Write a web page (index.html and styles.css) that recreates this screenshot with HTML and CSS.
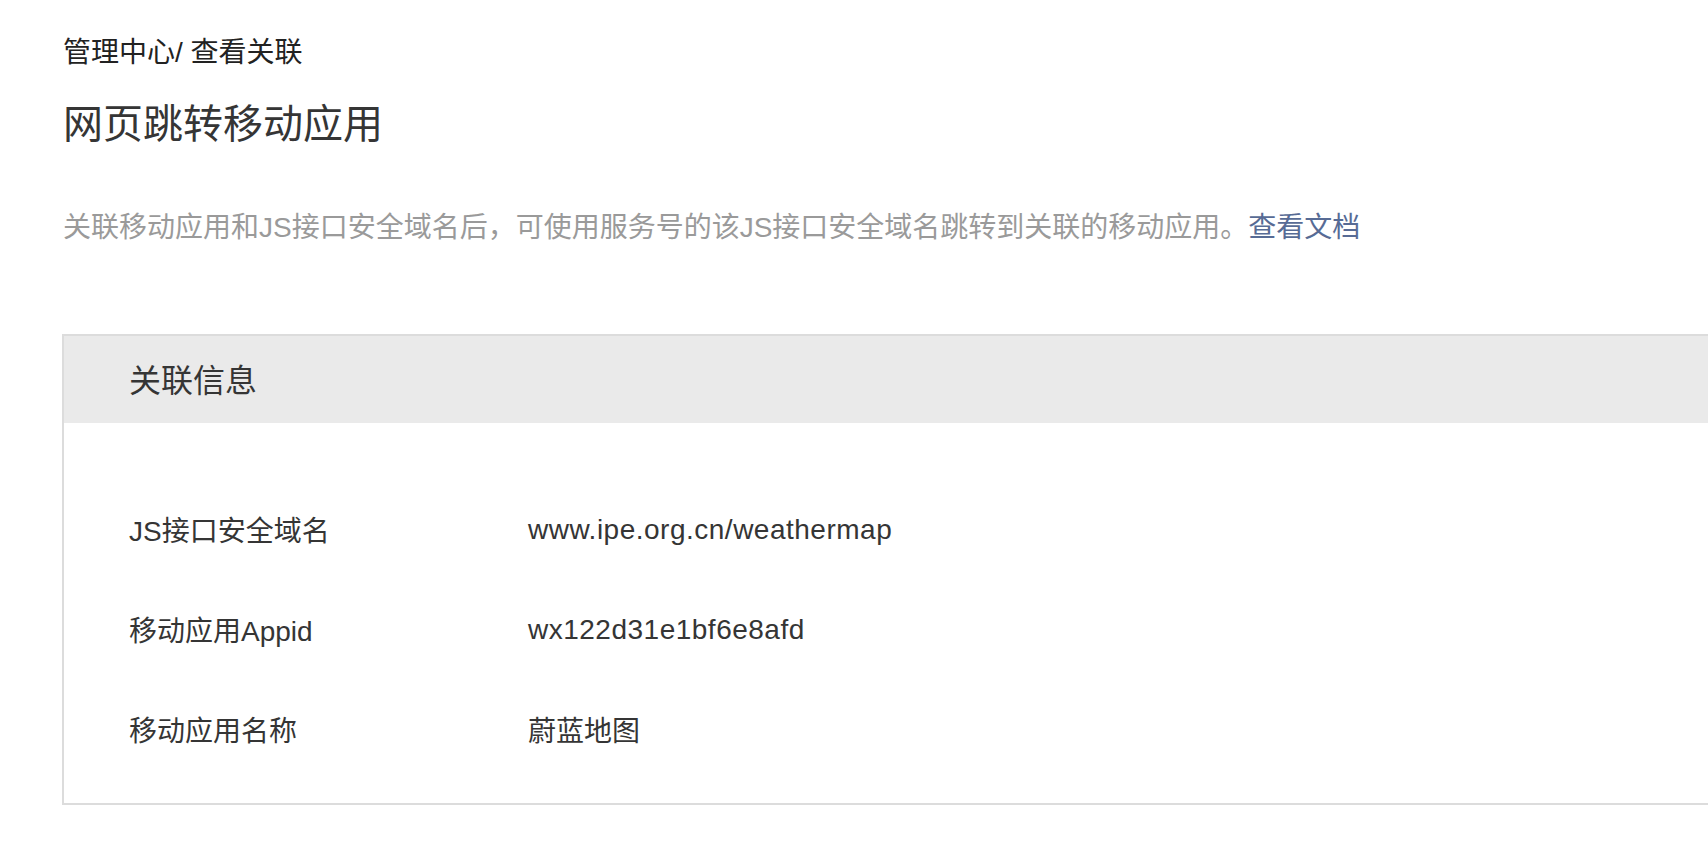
FILE: index.html
```html
<!DOCTYPE html>
<html lang="zh-CN">
<head>
<meta charset="utf-8">
<title>网页跳转移动应用</title>
<link rel="stylesheet" href="styles.css">
</head>
<body>
<div class="page">
  <div class="breadcrumb">管理中心/ 查看关联</div>
  <h1 class="title">网页跳转移动应用</h1>
  <p class="desc">关联移动应用和JS接口安全域名后，可使用服务号的该JS接口安全域名跳转到关联的移动应用。<a class="link" href="#">查看文档</a></p>
  <div class="card">
    <div class="card-head">关联信息</div>
    <div class="card-body">
      <div class="row"><div class="label">JS接口安全域名</div><div class="value latin">www.ipe.org.cn/weathermap</div></div>
      <div class="row"><div class="label">移动应用Appid</div><div class="value latin">wx122d31e1bf6e8afd</div></div>
      <div class="row"><div class="label">移动应用名称</div><div class="value">蔚蓝地图</div></div>
    </div>
  </div>
</div>
</body>
</html>
```
FILE: styles.css
```css
html, body {
  margin: 0;
  padding: 0;
  background: #fff;
  overflow: hidden;
}
body {
  font-family: "Liberation Sans", "Noto Sans CJK SC", sans-serif;
  color: #353535;
}
.page {
  padding: 33px 0 0 63px;
}
.breadcrumb {
  font-size: 28px;
  line-height: 40px;
  color: #222;
}
.title {
  margin: 23px 0 0;
  font-size: 40px;
  font-weight: normal;
  line-height: 56px;
  color: #353535;
}
.desc {
  margin: 56px 0 0;
  font-size: 28px;
  line-height: 40px;
  color: #9a9a9a;
  white-space: nowrap;
}
.link {
  color: #576b95;
  text-decoration: none;
}
.card {
  margin: 86px 0 0 -1px;
  width: 1800px;
  border: 2px solid #dcdcdc;
}
.card-head {
  height: 87px;
  line-height: 91px;
  background: #eaeaea;
  padding-left: 65px;
  font-size: 32px;
  color: #353535;
}
.card-body {
  padding: 56px 0 24px 65px;
}
.row {
  display: flex;
  height: 100px;
  align-items: center;
  font-size: 28px;
  color: #353535;
}
.label {
  width: 399px;
}
.latin {
  letter-spacing: 0.5px;
  padding-top: 2px;
}
```
